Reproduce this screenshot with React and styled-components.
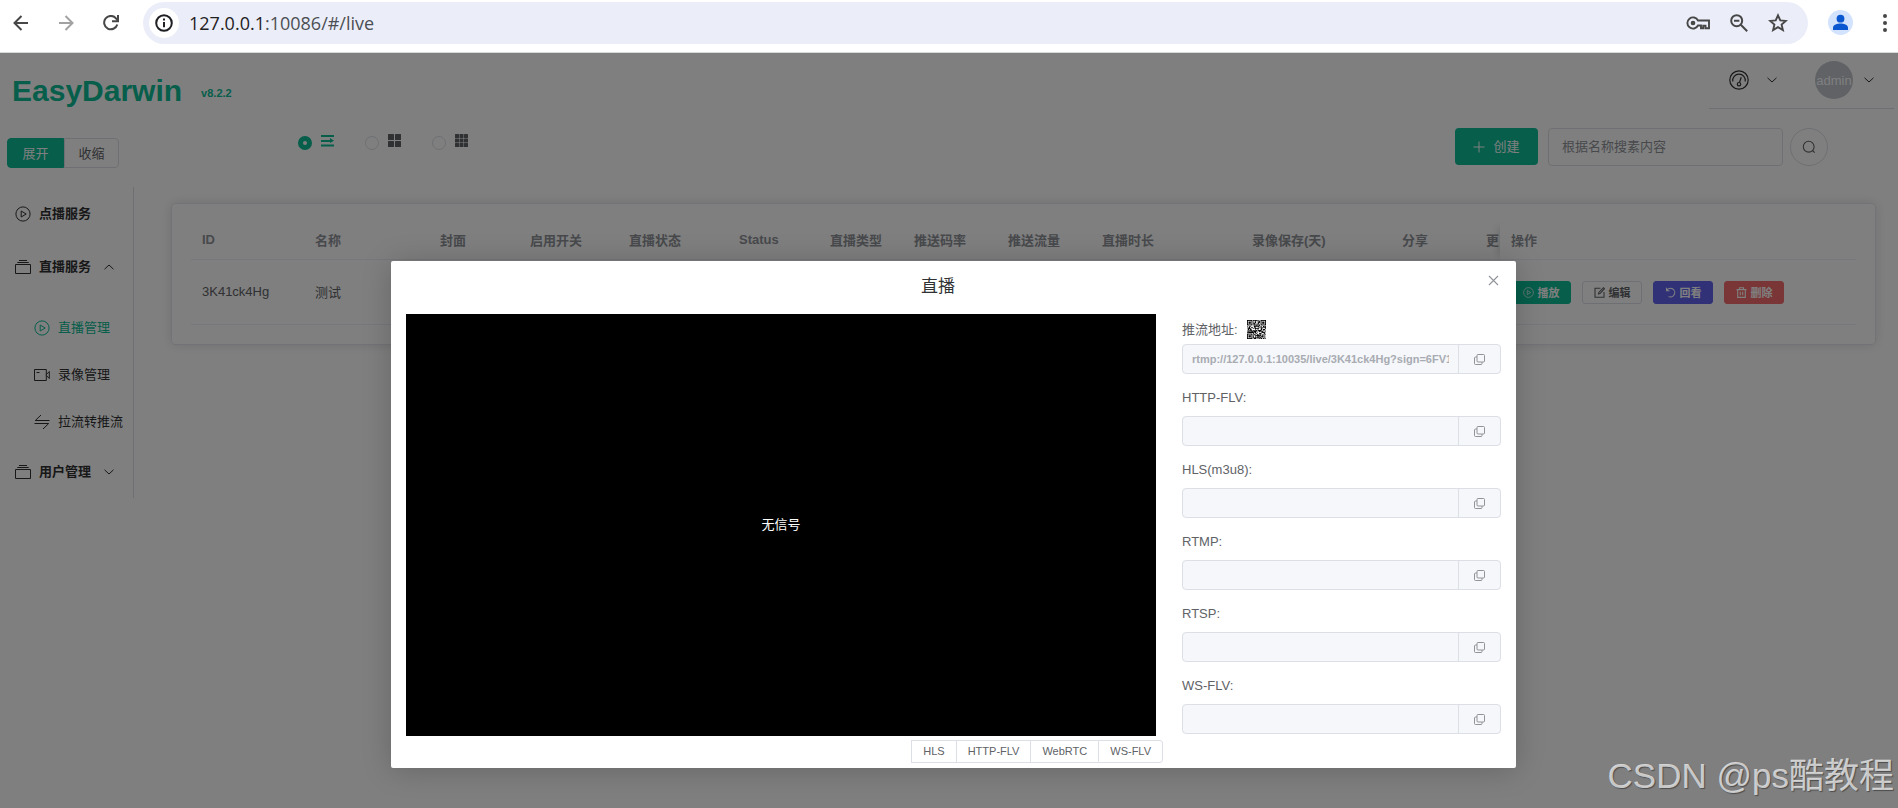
import React from "react";
import styled, { createGlobalStyle, css } from "styled-components";

const green = '#0cbc96'

const columns = [
    {name: 'ID', width: 113},
    {name: '名称', width: 125},
    {name: '封面', width: 90},
    {name: '启用开关', width: 99},
    {name: '直播状态', width: 110},
    {name: 'Status', width: 91},
    {name: '直播类型', width: 84},
    {name: '推送码率', width: 94},
    {name: '推送流量', width: 94},
    {name: '直播时长', width: 150},
    {name: '录像保存(天)', width: 150},
    {name: '分享', width: 84},
    {name: '更', width: 25},
]

const streams = [
    {id: '3K41ck4Hg', name: '测试'},
]

const addresses = [
    {name: '推流地址:', value: 'rtmp://127.0.0.1:10035/live/3K41ck4Hg?sign=6FV1c', qr: true},
    {name: 'HTTP-FLV:', value: ''},
    {name: 'HLS(m3u8):', value: ''},
    {name: 'RTMP:', value: ''},
    {name: 'RTSP:', value: ''},
    {name: 'WS-FLV:', value: ''},
]

const protocols = ['HLS', 'HTTP-FLV', 'WebRTC', 'WS-FLV']

export default function App(){
    return(
        <>
            <GlobalStyle/>
            <BrowserBar/>
            <Page>
                <TopBar>
                    <Brand>
                        <BrandName>EasyDarwin</BrandName>
                        <Version>v8.2.2</Version>
                    </Brand>
                    <UserNav>
                        <NavButton aria-label="dashboard">
                            <GaugeIcon/>
                            <ChevronIcon/>
                        </NavButton>
                        <NavButton $user>
                            <Avatar>admin</Avatar>
                            <ChevronIcon/>
                        </NavButton>
                    </UserNav>
                </TopBar>
                <Toolbar/>
                <Content>
                    <Sidebar/>
                    <StreamTable/>
                </Content>
                <Overlay>
                    <LiveDialog/>
                </Overlay>
                <Watermark>CSDN @ps酷教程</Watermark>
            </Page>
        </>
    )
}

function BrowserBar(){
    return(
        <Browser>
            <BrowserButtons>
                <PlainButton aria-label="back"><ArrowIcon/></PlainButton>
                <PlainButton aria-label="forward" $faded><ArrowIcon forward/></PlainButton>
                <PlainButton aria-label="reload"><ReloadIcon/></PlainButton>
            </BrowserButtons>
            <AddressBar>
                <SiteInfo aria-label="site info">
                    <svg width="18" height="18" viewBox="0 0 18 18" fill="none" stroke="#1f2023" strokeWidth="2">
                        <circle cx="9" cy="9" r="7.8"/>
                        <path d="M9 8v5.2M9 4.6v2"/>
                    </svg>
                </SiteInfo>
                <Url><b>127.0.0.1</b>:10086/#/live</Url>
                <AddressIcons>
                    <PlainButton aria-label="passwords"><KeyIcon/></PlainButton>
                    <PlainButton aria-label="zoom"><ZoomOutIcon/></PlainButton>
                    <PlainButton aria-label="bookmark"><StarIcon/></PlainButton>
                </AddressIcons>
            </AddressBar>
            <Profile aria-label="profile">
                <svg width="25" height="25" viewBox="0 0 25 25" fill="#0b57d0">
                    <circle cx="12.5" cy="8.7" r="3.9"/>
                    <path d="M5 20v-2.2c0-3 4.5-4.3 7.5-4.3s7.5 1.3 7.5 4.3V20z"/>
                </svg>
            </Profile>
            <PlainButton aria-label="menu">
                <svg width="6" height="20" viewBox="0 0 6 20" fill="#474747">
                    <circle cx="3" cy="3" r="2"/>
                    <circle cx="3" cy="10" r="2"/>
                    <circle cx="3" cy="17" r="2"/>
                </svg>
            </PlainButton>
        </Browser>
    )
}

function Toolbar(){
    return(
        <Tools>
            <ToggleGroup>
                <Toggle $active>展开</Toggle>
                <Toggle>收缩</Toggle>
            </ToggleGroup>
            <ViewModes>
                <ViewMode $active>
                    <Radio type="radio" name="view" aria-label="list" defaultChecked/>
                    <ListIcon/>
                </ViewMode>
                <ViewMode>
                    <Radio type="radio" name="view" aria-label="grid 4"/>
                    <GridIcon cells={2}/>
                </ViewMode>
                <ViewMode>
                    <Radio type="radio" name="view" aria-label="grid 9"/>
                    <GridIcon cells={3}/>
                </ViewMode>
            </ViewModes>
            <Actions>
                <CreateButton>
                    <svg width="12" height="12" viewBox="0 0 12 12" stroke="currentColor"><path d="M6 .5v11M.5 6h11"/></svg>
                    <Text>创建</Text>
                </CreateButton>
                <SearchInput aria-label="搜索" placeholder="根据名称搜素内容"/>
                <SearchButton aria-label="search">
                    <svg width="14" height="14" viewBox="0 0 14 14" fill="none" stroke="currentColor" strokeWidth="1.1">
                        <circle cx="6.7" cy="6.7" r="5.4"/>
                        <path d="M10.5 10.5l2.2 2.2"/>
                    </svg>
                </SearchButton>
            </Actions>
        </Tools>
    )
}

function Sidebar(){
    return(
        <Side>
            <MenuItem href="#/vod"><PlayIcon/><Text>点播服务</Text></MenuItem>
            <MenuItem href="#/live"><FilesIcon/><Text>直播服务</Text><ChevronIcon up/></MenuItem>
            <SubMenu>
                <SubItem href="#/live" $active><PlayIcon/><Text>直播管理</Text></SubItem>
                <SubItem href="#/record"><CameraIcon/><Text>录像管理</Text></SubItem>
                <SubItem href="#/pull"><SwitchIcon/><Text>拉流转推流</Text></SubItem>
            </SubMenu>
            <MenuItem href="#/user"><FilesIcon/><Text>用户管理</Text><ChevronIcon/></MenuItem>
        </Side>
    )
}

function StreamTable(){
    return(
        <Card>
            <Table>
                <colgroup>
                    {columns.map(col => <col key={col.name} width={col.width}/>)}
                    <col/>
                </colgroup>
                <thead>
                    <tr>
                        {columns.map(col => <Th key={col.name}>{col.name}</Th>)}
                        <Th $fixed>操作</Th>
                    </tr>
                </thead>
                <tbody>
                    {streams.map(item => (
                        <tr key={item.id}>
                            <Td>{item.id}</Td>
                            <Td>{item.name}</Td>
                            {columns.slice(2).map(col => <Td key={col.name}/>)}
                            <Td $fixed>
                                <RowButtons>
                                    <RowButton $color={green}><PlayIcon size={11}/>播放</RowButton>
                                    <RowButton><EditIcon/>编辑</RowButton>
                                    <RowButton $color="#6063ee"><ReplayIcon/>回看</RowButton>
                                    <RowButton $color="#f56c6c"><TrashIcon/>删除</RowButton>
                                </RowButtons>
                            </Td>
                        </tr>
                    ))}
                </tbody>
            </Table>
        </Card>
    )
}

function LiveDialog(){
    return(
        <Dialog role="dialog" aria-label="直播">
            <DialogHeader>
                <DialogTitle>直播</DialogTitle>
                <CloseButton aria-label="close">
                    <svg width="11" height="11" viewBox="0 0 11 11" stroke="currentColor" strokeWidth="1.1"><path d="M1 1l9 9M10 1l-9 9"/></svg>
                </CloseButton>
            </DialogHeader>
            <DialogBody>
                <PlayerColumn>
                    <Player><Text>无信号</Text></Player>
                    <Protocols>
                        {protocols.map(name => <Protocol key={name}>{name}</Protocol>)}
                    </Protocols>
                </PlayerColumn>
                <Addresses>
                    {addresses.map((item, index) => (
                        <Address key={item.name}>
                            <AddressLabel htmlFor={'address-' + index}>
                                <Text>{item.name}</Text>
                                {item.qr && <QrIcon/>}
                            </AddressLabel>
                            <AddressField>
                                <AddressInput id={'address-' + index} value={item.value} disabled/>
                                <CopyButton aria-label="copy"><CopyIcon/></CopyButton>
                            </AddressField>
                        </Address>
                    ))}
                </Addresses>
            </DialogBody>
        </Dialog>
    )
}

function ArrowIcon({forward}){
    return(
        <svg width="16" height="16" viewBox="0 0 16 16" fill="none" stroke="currentColor" strokeWidth="2">
            <path d={forward ? 'M1 8h13M7.5 1l7 7-7 7' : 'M15 8H2M8.5 1l-7 7 7 7'}/>
        </svg>
    )
}

function ReloadIcon(){
    return(
        <svg width="16" height="16" viewBox="0 0 16 16" fill="none" stroke="currentColor" strokeWidth="2">
            <path d="M14.3 9.5A6.7 6.7 0 1 1 13 3.3L14.8 5.5"/>
            <path d="M15 0v6.2H9"/>
        </svg>
    )
}

function KeyIcon(){
    return(
        <svg width="24" height="14" viewBox="0 0 24 14" fill="none" stroke="currentColor" strokeWidth="1.9">
            <path d="M12 4.5A5.6 5.6 0 1 0 12 9.5h3v2.7h2.2V9.8h2.3v2.4H23V4.5z"/>
            <circle cx="7" cy="7" r="1.4" fill="currentColor"/>
        </svg>
    )
}

function ZoomOutIcon(){
    return(
        <svg width="18" height="18" viewBox="0 0 18 18" fill="none" stroke="currentColor" strokeWidth="2">
            <circle cx="6.7" cy="6.7" r="5.5"/>
            <path d="M10.8 10.8l6.4 6.4M4 6.7h5.4"/>
        </svg>
    )
}

function StarIcon(){
    return(
        <svg width="20" height="19" viewBox="0 0 20 19" fill="none" stroke="currentColor" strokeWidth="1.9">
            <path d="M10 2.3l2.3 5.1 5.5.5-4.2 3.7 1.3 5.5L10 14.2l-4.9 2.9 1.3-5.5L2.2 7.9l5.5-.5z"/>
        </svg>
    )
}

function GaugeIcon(){
    return(
        <svg width="20" height="20" viewBox="0 0 20 20" fill="none" stroke="currentColor" strokeWidth="1.2">
            <circle cx="10" cy="10" r="9.2"/>
            <path d="M3.8 11.5a6.3 6.3 0 1 1 12.4 0"/>
            <path d="M12.2 7.3l-1.6 5"/>
            <circle cx="10" cy="14.2" r="1.7"/>
        </svg>
    )
}

function ChevronIcon({up}){
    return(
        <svg width="10" height="6" viewBox="0 0 10 6" fill="none" stroke="currentColor">
            <path d={up ? 'M.5 5.2L5 1l4.5 4.2' : 'M.5.8L5 5 9.5.8'}/>
        </svg>
    )
}

function PlayIcon({size = 16}){
    return(
        <svg width={size} height={size} viewBox="0 0 16 16" fill="none" stroke="currentColor">
            <circle cx="8" cy="8" r="7.1"/>
            <path d="M6.2 5v6l5-3z"/>
        </svg>
    )
}

function FilesIcon(){
    return(
        <svg width="16" height="16" viewBox="0 0 16 16" fill="none" stroke="currentColor">
            <path d="M.5 5.5h15v9H.5zM2.3 3.5h11.4M4 1.5h8"/>
        </svg>
    )
}

function CameraIcon(){
    return(
        <svg width="16" height="16" viewBox="0 0 16 16" fill="none" stroke="currentColor">
            <path d="M.5 2.5h11.8v11H.5zM12.3 7.5l3-3v7l-3-3M2.5 5.5h3"/>
        </svg>
    )
}

function SwitchIcon(){
    return(
        <svg width="16" height="16" viewBox="0 0 16 16" fill="none" stroke="currentColor">
            <path d="M7 1L1.3 6.5H15.5M9 15l5.7-5.500H.5"/>
        </svg>
    )
}

function ListIcon(){
    return(
        <svg width="13" height="13" viewBox="0 0 13 13" fill="currentColor">
            <path d="M0 1h13v2H0zM0 6h9V4l4 2.7L9 9V8H0zM0 10.5h13v2H0z"/>
        </svg>
    )
}

function GridIcon({cells}){
    const size = cells === 2 ? 6 : 4
    const step = (13 - size) / (cells - 1)
    const items = Array.from({length: cells * cells})
    return(
        <svg width="13" height="13" viewBox="0 0 13 13" fill="currentColor">
            {items.map((_, i) => (
                <rect key={i} x={(i % cells) * step} y={Math.floor(i / cells) * step} width={size} height={size} rx=".5"/>
            ))}
        </svg>
    )
}

function EditIcon(){
    return(
        <svg width="11" height="11" viewBox="0 0 11 11" fill="none" stroke="currentColor" strokeWidth="1.1">
            <path d="M6.5 1.2H1v9h9V5M4.5 7l.3-1.6L9.5.7l1 1L6 6.6z"/>
        </svg>
    )
}

function ReplayIcon(){
    return(
        <svg width="11" height="11" viewBox="0 0 11 11" fill="none" stroke="currentColor" strokeWidth="1.1">
            <path d="M1.5.8v3h3M1.7 3.5A4.3 4.3 0 1 1 3.6 9.5"/>
        </svg>
    )
}

function TrashIcon(){
    return(
        <svg width="11" height="11" viewBox="0 0 11 11" fill="none" stroke="currentColor" strokeWidth="1.1">
            <path d="M.5 2.6h10M3.5 2.5V.7h4v1.8M1.7 2.6v7.8h7.6V2.6M4.3 4.7v3.6M6.7 4.7v3.6"/>
        </svg>
    )
}

function CopyIcon(){
    return(
        <svg width="11" height="11" viewBox="0 0 11 11" fill="none" stroke="currentColor">
            <rect x="3" y=".5" width="7.5" height="7.5" rx="1"/>
            <path d="M3 3H1.5a1 1 0 0 0-1 1v5.5a1 1 0 0 0 1 1H7a1 1 0 0 0 1-1V8"/>
        </svg>
    )
}

// 25 x 25 modules, three finder squares in the corners
function QrIcon(){
    const n = 25
    let d = ''
    let seed = 7
    for(let y = 0; y < n; y++){
        for(let x = 0; x < n; x++){
            const inFinder = (x < 8 && y < 8) || (x > n - 9 && y < 8) || (x < 8 && y > n - 9)
            seed = (seed * 1103515 + 12345) % 2147483
            if(!inFinder && seed % 100 < 58){
                d += `M${x} ${y}h1v1h-1z`
            }
        }
    }
    return(
        <svg width="19" height="19" viewBox="0 0 25 25">
            <path d={d}/>
            {[[0, 0], [18, 0], [0, 18]].map(([x, y]) => (
                <g key={x + '-' + y}>
                    <rect x={x + .5} y={y + .5} width="6" height="6" fill="none" stroke="#000" strokeWidth="1.3"/>
                    <rect x={x + 2} y={y + 2} width="3" height="3"/>
                </g>
            ))}
        </svg>
    )
}

const GlobalStyle = createGlobalStyle`
* {
    box-sizing: border-box;
}

body {
    margin: 0;
    color: #303133;
    background: white;
    font-family: "Liberation Sans", "Noto Sans CJK SC", sans-serif;
    font-size: 13px;
}

button, input {
    font-family: inherit;
    font-size: 13px;
}

button {
    padding: 0;
    border: none;
    background: none;
    color: inherit;
    cursor: pointer;
}

svg {
    display: block;
    flex-shrink: 0;
}
`

const Text = styled.span`
padding-bottom: 2px;
`

const Browser = styled.header`
display: flex;
align-items: center;
height: 53px;
padding: 0 10px 7px 13px;
border-bottom: 1px solid #d3dbd7;
color: #474747;
`

const BrowserButtons = styled.div`
display: flex;
gap: 29px;
margin-right: 24px;
`

const PlainButton = styled.button`
display: flex;
align-items: center;
justify-content: center;
opacity: ${props => props.$faded ? 0.5 : 1};
`

const AddressBar = styled.div`
display: flex;
align-items: center;
flex: 1;
height: 42px;
padding: 0 20px 0 6px;
border-radius: 21px;
background: #ebeef8;
`

const SiteInfo = styled(PlainButton)`
width: 30px;
height: 30px;
border-radius: 50%;
background: white;
`

const Url = styled.div`
flex: 1;
margin-left: 10px;
color: #4c4f54;
font-family: "Open Sans", "Noto Sans", sans-serif;
font-size: 18px;

b {
    color: #1f2023;
    font-weight: 400;
}
`

const AddressIcons = styled.div`
display: flex;
align-items: center;
gap: 20px;
`

const Profile = styled(PlainButton)`
width: 25px;
height: 25px;
margin: 0 29px 0 20px;
border-radius: 50%;
background: #d3e3fd;
`

const Page = styled.div`
position: relative;
min-height: calc(100vh - 53px);
`

const TopBar = styled.div`
display: flex;
justify-content: space-between;
height: 56px;
padding: 0 4px 0 12px;
`

const Brand = styled.div`
display: flex;
align-items: center;
gap: 19px;
padding-top: 20px;
color: ${green};
font-weight: 700;
`

const BrandName = styled.h1`
margin: 0;
font-size: 30px;
line-height: 36px;
`

const Version = styled.span`
padding-top: 4px;
font-size: 11px;
`

const UserNav = styled.nav`
display: flex;
align-items: center;
gap: 38px;
padding: 0 20px 1px;
border-bottom: 1px solid #dcdfe6;
`

const NavButton = styled.button`
display: flex;
align-items: center;
gap: ${props => props.$user ? '11px' : '18px'};
`

const Avatar = styled.span`
display: flex;
align-items: center;
justify-content: center;
width: 38px;
height: 38px;
border-radius: 50%;
background: #c0c4cc;
color: white;
`

const Tools = styled.div`
display: flex;
align-items: flex-start;
height: 78px;
padding: 0 70px 0 7px;
`

const ToggleGroup = styled.div`
display: flex;
margin-top: 29px;
`

const Toggle = styled.button`
width: 55px;
height: 30px;
padding-bottom: 2px;
border: 1px solid #dcdfe6;
border-radius: 0 4px 4px 0;
color: #606266;

${props => props.$active && css`
    width: 57px;
    border-color: ${green};
    border-radius: 4px 0 0 4px;
    background: ${green};
    color: white;
`}
`

const ViewModes = styled.div`
display: flex;
gap: 31px;
margin: 25px 0 0 179px;
`

const ViewMode = styled.label`
display: flex;
gap: 9px;
color: ${props => props.$active ? green : '#606266'};
`

const Radio = styled.input`
appearance: none;
width: 14px;
height: 14px;
margin: 2px 0 0;
border: 1px solid #dcdfe6;
border-radius: 50%;

&:checked {
    border: 5px solid ${green};
}
`

const Actions = styled.div`
display: flex;
margin: 19px 0 0 auto;
`

const CreateButton = styled.button`
display: flex;
align-items: center;
justify-content: center;
gap: 8px;
width: 83px;
height: 37px;
border-radius: 4px;
background: ${green};
color: white;
`

const SearchInput = styled.input`
width: 235px;
height: 38px;
margin: 0 7px 0 10px;
padding: 0 13px 2px;
border: 1px solid #dcdfe6;
border-radius: 4px;

&::placeholder {
    color: #909399;
}
`

const SearchButton = styled(PlainButton)`
width: 38px;
height: 38px;
border: 1px solid #dcdfe6;
border-radius: 50%;
color: #606266;
`

const Content = styled.div`
display: flex;
align-items: flex-start;
`

const Side = styled.nav`
flex: 0 0 134px;
border-right: 1px solid #dcdfe6;
`

const MenuItem = styled.a`
display: flex;
align-items: center;
gap: 8px;
height: 53px;
padding-left: 15px;
color: #303133;
font-weight: 700;
text-decoration: none;

svg:last-child:not(:first-child) {
    margin-left: 5px;
}
`

const SubMenu = styled.div`
padding-top: 11px;
`

const SubItem = styled(MenuItem)`
height: 47px;
padding-left: 34px;
color: ${props => props.$active ? green : '#303133'};
font-weight: 400;
white-space: nowrap;
`

const Card = styled.main`
flex: 1;
min-width: 0;
margin: 16px 22px 0 37px;
padding: 19px;
overflow: hidden;
border: 1px solid #e4e7ed;
border-radius: 4px;
box-shadow: 0 0 12px rgba(0, 0, 0, 0.12);
`

const Table = styled.table`
width: 100%;
table-layout: fixed;
border-collapse: separate;
border-spacing: 0;
text-align: left;
`

const Th = styled.th`
height: 37px;
padding: 0 0 4px 11px;
overflow: hidden;
border-bottom: 1px solid #ebeef5;
color: #909399;
white-space: nowrap;
text-overflow: clip;

${props => props.$fixed && css`
    overflow: visible;
    box-shadow: -6px 0 8px -4px rgba(0, 0, 0, 0.15);
    clip-path: inset(0 0 0 -12px);
`}
`

const Td = styled.td`
height: 65px;
padding: 0 0 2px 11px;
border-bottom: 1px solid #ebeef5;
color: #606266;

${props => props.$fixed && css`
    padding-bottom: 0;
    box-shadow: -6px 0 8px -4px rgba(0, 0, 0, 0.15);
    clip-path: inset(0 0 0 -12px);
`}
`

const RowButtons = styled.div`
display: flex;
gap: 11px;
`

const RowButton = styled.button`
display: flex;
align-items: center;
justify-content: center;
gap: 4px;
width: 60px;
height: 23px;
border: 1px solid ${props => props.$color || '#dcdfe6'};
border-radius: 3px;
background: ${props => props.$color || 'white'};
color: ${props => props.$color ? 'white' : '#606266'};
font-size: 11px;
font-weight: 700;
`

const Overlay = styled.div`
position: absolute;
inset: 0;
display: flex;
align-items: flex-start;
justify-content: center;
padding: 208px 0 0 9px;
background: rgba(0, 0, 0, 0.5);
`

const Dialog = styled.section`
width: 90%;
max-width: 1125px;
padding: 0 15px 5px;
border-radius: 2px;
background: white;
box-shadow: 0 2px 30px rgba(0, 0, 0, 0.2);
`

const DialogHeader = styled.div`
display: flex;
height: 53px;
`

const DialogTitle = styled.h2`
flex: 1;
margin: 0;
padding-left: 2px;
font-size: 17px;
font-weight: 400;
line-height: 52px;
text-align: center;
`

const CloseButton = styled(PlainButton)`
width: 33px;
height: 39px;
padding-left: 17px;
color: #909399;
`

const DialogBody = styled.div`
display: flex;
gap: 19px;
`

const PlayerColumn = styled.div`
flex: 757;
`

const Player = styled.div`
display: flex;
align-items: center;
justify-content: center;
margin-right: 7px;
aspect-ratio: 16 / 9;
background: black;
color: white;
`

const Protocols = styled.div`
display: flex;
justify-content: flex-end;
margin-top: 4px;
`

const Protocol = styled.button`
height: 23px;
padding: 0 11px;
border: 1px solid #dcdfe6;
border-right-width: 0;
color: #606266;
font-size: 11px;

&:last-child {
    border-right-width: 1px;
    border-radius: 0 3px 3px 0;
}
`

const Addresses = styled.div`
flex: 319;
min-width: 0;
`

const Address = styled.div`
& + & {
    padding: 9px 0 0;
}

& + & label {
    margin-bottom: 3px;
}
`

const AddressLabel = styled.label`
display: flex;
align-items: center;
gap: 9px;
height: 30px;
color: #606266;
`

const AddressField = styled.div`
display: flex;
height: 30px;
overflow: hidden;
border: 1px solid #dcdfe6;
border-radius: 4px;
background: #f5f7fa;
`

const AddressInput = styled.input`
flex: 1;
min-width: 0;
padding: 0 9px;
border: none;
background: none;
color: #a8abb2;
font-size: 11px;
font-weight: 700;
`

const CopyButton = styled(PlainButton)`
width: 42px;
border-left: 1px solid #dcdfe6;
color: #909399;
`

const Watermark = styled.div`
position: absolute;
right: 4px;
bottom: 6px;
color: rgba(255, 255, 255, 0.7);
font-size: 35px;
line-height: 52px;
text-shadow: 1px 1px 1px rgba(0, 0, 0, 0.4);
`
